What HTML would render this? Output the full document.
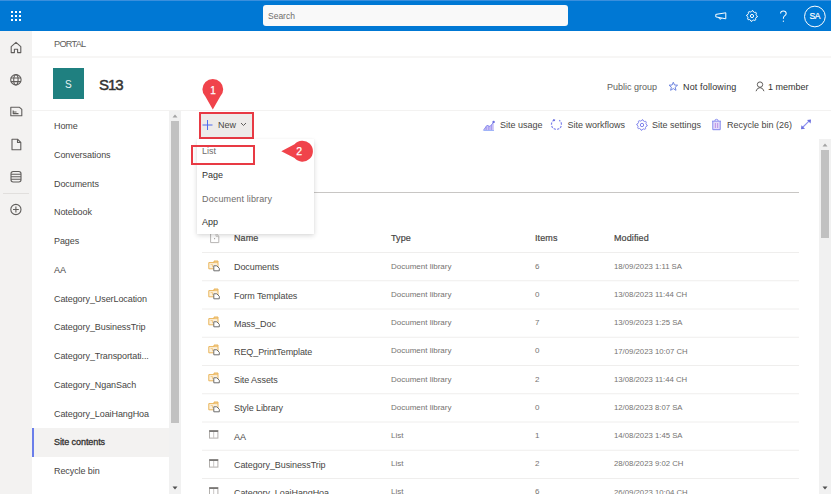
<!DOCTYPE html>
<html><head><meta charset="utf-8">
<style>
*{box-sizing:border-box;margin:0;padding:0}
html,body{width:831px;height:499px;overflow:hidden;background:#fff;font-family:"Liberation Sans",sans-serif;color:#323130}
#wrap{position:absolute;left:0;top:0;width:831px;height:494px;overflow:hidden;background:#fff}
.a{position:absolute;white-space:nowrap;line-height:1}
svg.a{overflow:visible}
#top{position:absolute;left:0;top:0;width:831px;height:31px;background:#0078d4;border-top:1px solid #3a8fdd}
#search{position:absolute;left:262.5px;top:5px;width:305.5px;height:21px;background:#f9f9f9;border-radius:3px}
#rail{position:absolute;left:0;top:31px;width:32px;height:463px;background:#f3f2f1}
.nav{position:absolute;left:54px;margin-top:0.5px;font-size:9px;line-height:1;white-space:nowrap;color:#484644;letter-spacing:-0.08px}
.row{position:absolute;left:202px;width:597px;height:1px;background:#edebe9}
.nm{position:absolute;left:234px;font-size:9px;line-height:1;white-space:nowrap;color:#484644;letter-spacing:-0.08px}
.ty{position:absolute;left:391px;font-size:8px;line-height:1;white-space:nowrap;color:#757371}
.it{position:absolute;left:535px;font-size:8px;line-height:1;white-space:nowrap;color:#757371}
.md{position:absolute;left:614px;font-size:7.75px;line-height:1;white-space:nowrap;color:#757371}
.cmd{position:absolute;margin-top:0.8px;font-size:9px;line-height:1;white-space:nowrap;color:#484644}
.th{position:absolute;margin-top:0.5px;letter-spacing:0.1px;font-size:9px;-webkit-text-stroke:0.2px #484644;color:#484644;line-height:1;white-space:nowrap}
.mi{position:absolute;left:202px;font-size:9px;line-height:1;white-space:nowrap}
</style></head><body>
<div id="wrap">
<div id="top">
  <svg class="a" style="left:10px;top:9px" width="12" height="12" viewBox="0 0 12 12" fill="#fff">
    <rect x="1" y="1" width="2" height="2"/><rect x="5" y="1" width="2" height="2"/><rect x="9" y="1" width="2" height="2"/>
    <rect x="1" y="5" width="2" height="2"/><rect x="5" y="5" width="2" height="2"/><rect x="9" y="5" width="2" height="2"/>
    <rect x="1" y="9" width="2" height="2"/><rect x="5" y="9" width="2" height="2"/><rect x="9" y="9" width="2" height="2"/>
  </svg>
  <!-- megaphone -->
  <svg class="a" style="left:715px;top:10.2px" width="12" height="9" viewBox="0 0 12 9" fill="none" stroke="#fff" stroke-width="1" stroke-linejoin="round">
    <path d="M0.8 3.4 L10.8 1.8 V7.8 L0.8 5.9 Z"/><path d="M3.6 6.4 Q4 8.3 6 8.1 L6.4 7.2"/>
  </svg>
  <!-- gear -->
  <svg class="a" style="left:746.3px;top:8.8px" width="12" height="12" viewBox="0 0 12 12" fill="none" stroke="#fff" stroke-width="1" stroke-linejoin="round">
  <path d="M6.00 0.70 L7.03 0.80 L7.65 2.03 L8.39 2.42 L9.75 2.25 L10.41 3.06 L9.97 4.35 L10.22 5.16 L11.30 6.00 L11.20 7.03 L9.97 7.65 L9.58 8.39 L9.75 9.75 L8.94 10.41 L7.65 9.97 L6.84 10.22 L6.00 11.30 L4.97 11.20 L4.35 9.97 L3.61 9.58 L2.25 9.75 L1.59 8.94 L2.03 7.65 L1.78 6.84 L0.70 6.00 L0.80 4.97 L2.03 4.35 L2.42 3.61 L2.25 2.25 L3.06 1.59 L4.35 2.03 L5.16 1.78 Z"/><circle cx="6" cy="6" r="1.6"/>
</svg>
  <svg class="a" style="left:779px;top:9px" width="9" height="13" viewBox="0 0 9 13" fill="none" stroke="#fff" stroke-width="1.05"><path d="M1.6 3.6 Q1.6 1 4.3 1 Q7.2 1 7.2 3.5 Q7.2 5 5.6 5.9 Q4.4 6.6 4.4 8.3 V8.8"/><circle cx="4.4" cy="11.2" r="0.65" fill="#fff" stroke="none"/></svg>
  <svg class="a" style="left:803px;top:3.8px" width="23" height="23" viewBox="0 0 23 23"><circle cx="11.9" cy="11.5" r="10.35" fill="none" stroke="#fff" stroke-width="1"/></svg>
  <div class="a" style="left:809.5px;top:10.8px;font-size:8.6px;color:#fff;letter-spacing:-0.5px;-webkit-text-stroke:0.2px #fff">SA</div>
</div>
<div id="search"><div class="a" style="left:5.5px;top:7.2px;font-size:8.5px;color:#6f6d6b">Search</div></div>

<div id="rail">
  <div class="a" style="left:3px;top:162px;width:26px;height:1px;background:#e1dfdd"></div>
</div>
<!-- rail icons -->
<svg class="a" style="left:10px;top:41px" width="12" height="13" viewBox="0 0 12 13" fill="none" stroke="#605e5c" stroke-width="1.1" stroke-linejoin="round">
  <path d="M1.2 5.6 L6 1.3 L10.8 5.6 V11.6 H7.6 V8.2 H4.4 V11.6 H1.2 Z"/>
</svg>
<svg class="a" style="left:10px;top:73px" width="12" height="13" viewBox="0 0 12 13" fill="none" stroke="#605e5c" stroke-width="1.1">
  <circle cx="5.9" cy="6.8" r="5.2"/><ellipse cx="5.9" cy="6.8" rx="2.2" ry="5.2"/><path d="M0.8 5 H11 M0.8 8.6 H11"/>
</svg>
<svg class="a" style="left:10px;top:106px" width="13" height="11" viewBox="0 0 13 11" fill="none" stroke="#605e5c" stroke-width="1.1" stroke-linejoin="round">
  <path d="M0.8 1.3 H9.5 L11.8 3.4 V9.8 H0.8 Z"/><path d="M3.2 4.5 V7.6 H8.5 M3.2 6 H6.5"/>
</svg>
<svg class="a" style="left:11px;top:138px" width="11" height="13" viewBox="0 0 11 13" fill="none" stroke="#605e5c" stroke-width="1.1" stroke-linejoin="round">
  <path d="M1 1.2 H6.5 L9.8 4.5 V11.8 H1 Z"/><path d="M6.5 1.2 V4.5 H9.8"/>
</svg>
<svg class="a" style="left:10px;top:170px" width="12" height="13" viewBox="0 0 12 13" fill="none" stroke="#605e5c" stroke-width="1.1">
  <rect x="1" y="1.5" width="10" height="10.5" rx="2.2"/><path d="M1 4.3 H11 M1 6.8 H11 M1 9.3 H11"/>
</svg>
<svg class="a" style="left:10px;top:203px" width="12" height="13" viewBox="0 0 12 13" fill="none" stroke="#605e5c" stroke-width="1.1">
  <circle cx="5.9" cy="6.5" r="5.1"/><path d="M5.9 3.6 V9.4 M3 6.5 H8.8"/>
</svg>

<!-- header -->
<div class="a" style="left:54px;top:40.2px;font-size:9.2px;letter-spacing:-0.75px;color:#605e5c">PORTAL</div>
<div class="a" style="left:32px;top:56px;width:799px;height:2px;background:#f7f6f5"></div>
<div class="a" style="left:53px;top:68px;width:31px;height:31px;background:#1f8080"></div>
<div class="a" style="left:65px;top:80.2px;font-size:10px;color:#e8f3f3">S</div>
<div class="a" style="left:99px;top:77px;font-size:15px;-webkit-text-stroke:0.45px #323130;letter-spacing:-1.1px;color:#323130">S13</div>

<div class="a" style="left:607px;top:82.5px;font-size:9px;color:#605e5c">Public group</div>
<svg class="a" style="left:668px;top:81px" width="11" height="11" viewBox="0 0 11 11" fill="none" stroke="#6f86e0" stroke-width="1" stroke-linejoin="round">
  <path d="M5.3 1.2 L6.5 4 L9.6 4.2 L7.2 6.2 L8 9.3 L5.3 7.6 L2.6 9.3 L3.4 6.2 L1 4.2 L4.1 4 Z"/>
</svg>
<div class="a" style="left:683px;top:82.5px;font-size:9px;letter-spacing:0.15px;color:#323130">Not following</div>
<svg class="a" style="left:755px;top:81px" width="10" height="11" viewBox="0 0 10 11" fill="none" stroke="#605e5c" stroke-width="1">
  <circle cx="5" cy="3.6" r="2.7"/><path d="M1 10.2 Q2 6.8 5 6.6 Q8 6.8 9 10.2"/>
</svg>
<div class="a" style="left:768px;top:82.5px;font-size:9px;color:#323130">1 member</div>

<div class="a" style="left:32px;top:110px;width:799px;height:1px;background:#f3f2f1"></div>

<!-- nav -->
<div class="a" style="left:32px;top:428px;width:137px;height:29px;background:#f3f2f1"></div>
<div class="a" style="left:32px;top:428px;width:2px;height:29px;background:#6a7eea"></div>
<div class="a" style="left:169px;top:111px;width:12px;height:383px;background:#f1f1f1"></div>
<div class="a" style="left:171px;top:121px;width:8px;height:302px;background:#c1c1c1"></div>
<svg class="a" style="left:172px;top:114px" width="6" height="4" viewBox="0 0 6 4"><path d="M0.5 3.5 L3 0.5 L5.5 3.5 Z" fill="#a3a3a3"/></svg>
<svg class="a" style="left:172px;top:486px" width="6" height="4" viewBox="0 0 6 4"><path d="M0.5 0.5 L3 3.5 L5.5 0.5 Z" fill="#505050"/></svg>

<div class="nav" style="top:121.4px">Home</div>
<div class="nav" style="top:150.2px">Conversations</div>
<div class="nav" style="top:179px">Documents</div>
<div class="nav" style="top:207.7px">Notebook</div>
<div class="nav" style="top:236.5px">Pages</div>
<div class="nav" style="top:265.3px">AA</div>
<div class="nav" style="top:294.1px">Category_UserLocation</div>
<div class="nav" style="top:322.8px">Category_BusinessTrip</div>
<div class="nav" style="top:351.6px">Category_Transportati...</div>
<div class="nav" style="top:380.4px">Category_NganSach</div>
<div class="nav" style="top:409.2px">Category_LoaiHangHoa</div>
<div class="nav" style="top:437.9px;color:#323130;-webkit-text-stroke:0.3px #323130">Site contents</div>
<div class="nav" style="top:466.7px">Recycle bin</div>

<!-- command bar -->
<div class="a" style="left:199px;top:111.5px;width:54.5px;height:27.5px;background:#edebe9;border:2px solid #e83a44"></div>
<svg class="a" style="left:202px;top:119px" width="11" height="12" viewBox="0 0 11 12" fill="none" stroke="#4f6bed" stroke-width="1"><path d="M5.5 1 V11 M0.5 6 H10.5"/></svg>
<div class="cmd" style="left:218px;top:120px">New</div>
<svg class="a" style="left:240px;top:122px" width="7" height="5" viewBox="0 0 7 5" fill="none" stroke="#605e5c" stroke-width="1"><path d="M1 1 L3.5 3.5 L6 1"/></svg>

<svg class="a" style="left:483px;top:120px" width="12" height="11" viewBox="0 0 12 11">
  <path d="M0.5 10.5 L4 5.3 L7 6.5 L10.8 2.2 V10.5 Z" fill="#c9c2f5"/>
  <path d="M3.2 10.5 V6.5 M5.8 10.5 V6 M8.4 10.5 V5" stroke="#a89cf0" stroke-width="1.2"/>
  <path d="M0.5 10.2 L4 5.3 L7 6.5 L10.8 2" fill="none" stroke="#8b8ff0" stroke-width="1"/>
  <circle cx="10.6" cy="1.9" r="1.2" fill="#6b6fe0"/>
  <path d="M0.5 10.5 H11" stroke="#a0b4f8" stroke-width="1"/>
</svg>
<div class="cmd" style="left:500px;top:120px">Site usage</div>
<svg class="a" style="left:550px;top:118px" width="13" height="13" viewBox="0 0 13 13" fill="none" stroke="#7f83ec" stroke-width="1.2">
  <path d="M4.2 2 A5 5 0 1 0 9.2 2.3" stroke-dasharray="2.2 1.2"/><path d="M3.2 1.8 L5 2.5" stroke="#6b6fe0" stroke-width="1.5"/>
</svg>
<div class="cmd" style="left:567.5px;top:120px">Site workflows</div>
<svg class="a" style="left:635.5px;top:119px" width="12" height="12" viewBox="0 0 12 12" fill="none" stroke="#7f83ec" stroke-width="1" stroke-linejoin="round">
  <path d="M6.00 0.80 L7.01 0.90 L7.61 2.12 L8.33 2.51 L9.68 2.32 L10.32 3.11 L9.88 4.39 L10.12 5.18 L11.20 6.00 L11.10 7.01 L9.88 7.61 L9.49 8.33 L9.68 9.68 L8.89 10.32 L7.61 9.88 L6.82 10.12 L6.00 11.20 L4.99 11.10 L4.39 9.88 L3.67 9.49 L2.32 9.68 L1.68 8.89 L2.12 7.61 L1.88 6.82 L0.80 6.00 L0.90 4.99 L2.12 4.39 L2.51 3.67 L2.32 2.32 L3.11 1.68 L4.39 2.12 L5.18 1.88 Z"/><circle cx="6" cy="6" r="1.7"/>
</svg>
<div class="cmd" style="left:652px;top:120px">Site settings</div>
<svg class="a" style="left:711px;top:118px" width="11" height="13" viewBox="0 0 11 13" fill="none" stroke-linejoin="round">
  <path d="M2.2 3.2 H8.8 V11.5 H2.2 Z" fill="#e4dcfa" stroke="none"/>
  <path d="M4.4 5 V10 M6.6 5 V10" stroke="#c29be8" stroke-width="1.2"/>
  <path d="M1 3.2 H10 M3.8 3 Q3.8 1.3 5.5 1.3 Q7.2 1.3 7.2 3" stroke="#8b8ff0" stroke-width="1"/>
  <path d="M1.8 3.2 V11.7 H9.2 V3.2" stroke="#7f83ec" stroke-width="1"/>
</svg>
<div class="cmd" style="left:727px;top:120px">Recycle bin (26)</div>
<svg class="a" style="left:800px;top:119px" width="12" height="11" viewBox="0 0 12 11">
  <path d="M3 8 L9 2.2" stroke="#8a8ef0" stroke-width="1.1"/><path d="M11 0.6 L10.6 4.6 L7 1 Z" fill="#6b6fe0"/><path d="M1 10.2 L1.4 6.2 L5 9.8 Z" fill="#6b6fe0"/>
</svg>

<!-- main scrollbar -->
<div class="a" style="left:819px;top:139px;width:12px;height:355px;background:#f1f1f1"></div>
<div class="a" style="left:821px;top:150px;width:8px;height:88px;background:#c1c1c1"></div>
<svg class="a" style="left:822px;top:143px" width="6" height="4" viewBox="0 0 6 4"><path d="M0.5 3.5 L3 0.5 L5.5 3.5 Z" fill="#a3a3a3"/></svg>
<svg class="a" style="left:822px;top:486px" width="6" height="4" viewBox="0 0 6 4"><path d="M0.5 0.5 L3 3.5 L5.5 0.5 Z" fill="#505050"/></svg>

<div class="a" style="left:197px;top:192px;width:602px;height:1px;background:#c8c6c4"></div>

<!-- table header -->
<svg class="a" style="left:210px;top:233px" width="11" height="11" viewBox="0 0 11 11" fill="none" stroke="#b8b6b4" stroke-width="1" stroke-linejoin="round">
  <path d="M0.6 0.6 H6.2 L8.8 3.2 V9.6 H0.6 Z"/><path d="M6 0.6 V3.3 H8.8" stroke="#c8c6c4"/><path d="M4.6 5.2 V6.2" stroke="#8a8886"/>
</svg>
<div class="th" style="left:234px;top:233.5px">Name</div>
<div class="th" style="left:391px;top:233.5px">Type</div>
<div class="th" style="left:535px;top:233.5px">Items</div>
<div class="th" style="left:614px;top:233.5px">Modified</div>

<div id="rows"></div>
<svg class="a" style="left:202px;top:0px" width="597" height="494" viewBox="0 0 597 494" stroke="#efeeed" stroke-width="1"><line x1="0" x2="597" y1="252.50" y2="252.50"/><line x1="0" x2="597" y1="280.75" y2="280.75"/><line x1="0" x2="597" y1="309.00" y2="309.00"/><line x1="0" x2="597" y1="337.25" y2="337.25"/><line x1="0" x2="597" y1="365.50" y2="365.50"/><line x1="0" x2="597" y1="393.75" y2="393.75"/><line x1="0" x2="597" y1="422.00" y2="422.00"/><line x1="0" x2="597" y1="450.25" y2="450.25"/><line x1="0" x2="597" y1="478.50" y2="478.50"/></svg>
<svg class="a" style="left:208px;top:259.6px" width="13" height="12" viewBox="0 0 13 12"><path d="M0.8 2.6 H10 V8.8 H0.8 Z" fill="#fdf1dc" stroke="#e9b45a" stroke-width="1"/><path d="M6 2.6 V1 H10 V2.6" fill="#f4cf8f" stroke="#e9b45a" stroke-width="1"/><path d="M2.6 4.6 H4.6 V7.2" fill="none" stroke="#f0c57a" stroke-width="0.9"/><path d="M5.8 5.8 H8.8 L11.3 8.3 V10.8 H5.8 Z" fill="#fff" stroke="#6e6e6e" stroke-width="1" stroke-linejoin="round"/></svg>
<div class="nm" style="top:263.38px">Documents</div>
<div class="ty" style="top:262.73px">Document library</div>
<div class="it" style="top:262.73px">6</div>
<div class="md" style="top:262.94px">18/09/2023 1:11 SA</div>
<svg class="a" style="left:208px;top:287.8px" width="13" height="12" viewBox="0 0 13 12"><path d="M0.8 2.6 H10 V8.8 H0.8 Z" fill="#fdf1dc" stroke="#e9b45a" stroke-width="1"/><path d="M6 2.6 V1 H10 V2.6" fill="#f4cf8f" stroke="#e9b45a" stroke-width="1"/><path d="M2.6 4.6 H4.6 V7.2" fill="none" stroke="#f0c57a" stroke-width="0.9"/><path d="M5.8 5.8 H8.8 L11.3 8.3 V10.8 H5.8 Z" fill="#fff" stroke="#6e6e6e" stroke-width="1" stroke-linejoin="round"/></svg>
<div class="nm" style="top:291.58px">Form Templates</div>
<div class="ty" style="top:290.93px">Document library</div>
<div class="it" style="top:290.93px">0</div>
<div class="md" style="top:291.14px">13/08/2023 11:44 CH</div>
<svg class="a" style="left:208px;top:316.0px" width="13" height="12" viewBox="0 0 13 12"><path d="M0.8 2.6 H10 V8.8 H0.8 Z" fill="#fdf1dc" stroke="#e9b45a" stroke-width="1"/><path d="M6 2.6 V1 H10 V2.6" fill="#f4cf8f" stroke="#e9b45a" stroke-width="1"/><path d="M2.6 4.6 H4.6 V7.2" fill="none" stroke="#f0c57a" stroke-width="0.9"/><path d="M5.8 5.8 H8.8 L11.3 8.3 V10.8 H5.8 Z" fill="#fff" stroke="#6e6e6e" stroke-width="1" stroke-linejoin="round"/></svg>
<div class="nm" style="top:319.78px">Mass_Doc</div>
<div class="ty" style="top:319.13px">Document library</div>
<div class="it" style="top:319.13px">7</div>
<div class="md" style="top:319.34px">13/09/2023 1:25 SA</div>
<svg class="a" style="left:208px;top:344.2px" width="13" height="12" viewBox="0 0 13 12"><path d="M0.8 2.6 H10 V8.8 H0.8 Z" fill="#fdf1dc" stroke="#e9b45a" stroke-width="1"/><path d="M6 2.6 V1 H10 V2.6" fill="#f4cf8f" stroke="#e9b45a" stroke-width="1"/><path d="M2.6 4.6 H4.6 V7.2" fill="none" stroke="#f0c57a" stroke-width="0.9"/><path d="M5.8 5.8 H8.8 L11.3 8.3 V10.8 H5.8 Z" fill="#fff" stroke="#6e6e6e" stroke-width="1" stroke-linejoin="round"/></svg>
<div class="nm" style="top:347.98px">REQ_PrintTemplate</div>
<div class="ty" style="top:347.33px">Document library</div>
<div class="it" style="top:347.33px">0</div>
<div class="md" style="top:347.54px">17/09/2023 10:07 CH</div>
<svg class="a" style="left:208px;top:372.4px" width="13" height="12" viewBox="0 0 13 12"><path d="M0.8 2.6 H10 V8.8 H0.8 Z" fill="#fdf1dc" stroke="#e9b45a" stroke-width="1"/><path d="M6 2.6 V1 H10 V2.6" fill="#f4cf8f" stroke="#e9b45a" stroke-width="1"/><path d="M2.6 4.6 H4.6 V7.2" fill="none" stroke="#f0c57a" stroke-width="0.9"/><path d="M5.8 5.8 H8.8 L11.3 8.3 V10.8 H5.8 Z" fill="#fff" stroke="#6e6e6e" stroke-width="1" stroke-linejoin="round"/></svg>
<div class="nm" style="top:376.18px">Site Assets</div>
<div class="ty" style="top:375.53px">Document library</div>
<div class="it" style="top:375.53px">2</div>
<div class="md" style="top:375.74px">13/08/2023 11:44 CH</div>
<svg class="a" style="left:208px;top:400.6px" width="13" height="12" viewBox="0 0 13 12"><path d="M0.8 2.6 H10 V8.8 H0.8 Z" fill="#fdf1dc" stroke="#e9b45a" stroke-width="1"/><path d="M6 2.6 V1 H10 V2.6" fill="#f4cf8f" stroke="#e9b45a" stroke-width="1"/><path d="M2.6 4.6 H4.6 V7.2" fill="none" stroke="#f0c57a" stroke-width="0.9"/><path d="M5.8 5.8 H8.8 L11.3 8.3 V10.8 H5.8 Z" fill="#fff" stroke="#6e6e6e" stroke-width="1" stroke-linejoin="round"/></svg>
<div class="nm" style="top:404.38px">Style Library</div>
<div class="ty" style="top:403.73px">Document library</div>
<div class="it" style="top:403.73px">0</div>
<div class="md" style="top:403.94px">12/08/2023 8:07 SA</div>
<svg class="a" style="left:209.3px;top:430.3px" width="10" height="9" viewBox="0 0 10 9"><rect x="0.5" y="0.5" width="8.4" height="7.6" fill="#fff" stroke="#b3b0ad" stroke-width="1"/><rect x="0.3" y="0.3" width="8.8" height="1.7" fill="#7a7876"/><path d="M4.7 2 V8" stroke="#c8c6c4" stroke-width="1"/></svg>
<div class="nm" style="top:432.58px">AA</div>
<div class="ty" style="top:431.93px">List</div>
<div class="it" style="top:431.93px">1</div>
<div class="md" style="top:432.14px">14/08/2023 1:45 SA</div>
<svg class="a" style="left:209.3px;top:458.5px" width="10" height="9" viewBox="0 0 10 9"><rect x="0.5" y="0.5" width="8.4" height="7.6" fill="#fff" stroke="#b3b0ad" stroke-width="1"/><rect x="0.3" y="0.3" width="8.8" height="1.7" fill="#7a7876"/><path d="M4.7 2 V8" stroke="#c8c6c4" stroke-width="1"/></svg>
<div class="nm" style="top:460.78px">Category_BusinessTrip</div>
<div class="ty" style="top:460.13px">List</div>
<div class="it" style="top:460.13px">2</div>
<div class="md" style="top:460.34px">28/08/2023 9:02 CH</div>
<svg class="a" style="left:209.3px;top:486.7px" width="10" height="9" viewBox="0 0 10 9"><rect x="0.5" y="0.5" width="8.4" height="7.6" fill="#fff" stroke="#b3b0ad" stroke-width="1"/><rect x="0.3" y="0.3" width="8.8" height="1.7" fill="#7a7876"/><path d="M4.7 2 V8" stroke="#c8c6c4" stroke-width="1"/></svg>
<div class="nm" style="top:488.98px">Category_LoaiHangHoa</div>
<div class="ty" style="top:488.33px">List</div>
<div class="it" style="top:488.33px">6</div>
<div class="md" style="top:488.54px">26/09/2023 10:04 CH</div>

<!-- dropdown menu -->
<div class="a" style="left:197px;top:139px;width:117px;height:94.5px;background:#fff;box-shadow:0 1.5px 5px rgba(0,0,0,.16),0 0 1px rgba(0,0,0,.06)"></div>
<div class="a" style="left:191px;top:145px;width:64px;height:20px;border:2px solid #e83a44"></div>
<div class="mi" style="top:147px;color:#6f6d6b">List</div>
<div class="mi" style="top:171px;color:#323130">Page</div>
<div class="mi" style="top:194.5px;color:#6f6d6b;letter-spacing:0.13px">Document library</div>
<div class="mi" style="top:217.6px;color:#323130">App</div>

<!-- markers -->
<svg class="a" style="left:200px;top:76px" width="26" height="36" viewBox="0 0 26 36">
  <path d="M12.8 33.6 L5.4 20.6 A10.4 10.4 0 1 1 20.2 20.6 Z" fill="#f0434b"/>
</svg>
<div class="a" style="left:210.3px;top:85.5px;font-size:10px;-webkit-text-stroke:0.25px #fff;color:#fff">1</div>
<svg class="a" style="left:278px;top:138px" width="38" height="26" viewBox="0 0 38 26">
  <path d="M3.3 13.2 L16.5 6.3 A10.5 10.5 0 1 1 16.5 20.1 Z" fill="#f0434b"/>
</svg>
<div class="a" style="left:296.3px;top:146.3px;font-size:10.5px;-webkit-text-stroke:0.25px #fff;color:#fff">2</div>
</div>
</body></html>
